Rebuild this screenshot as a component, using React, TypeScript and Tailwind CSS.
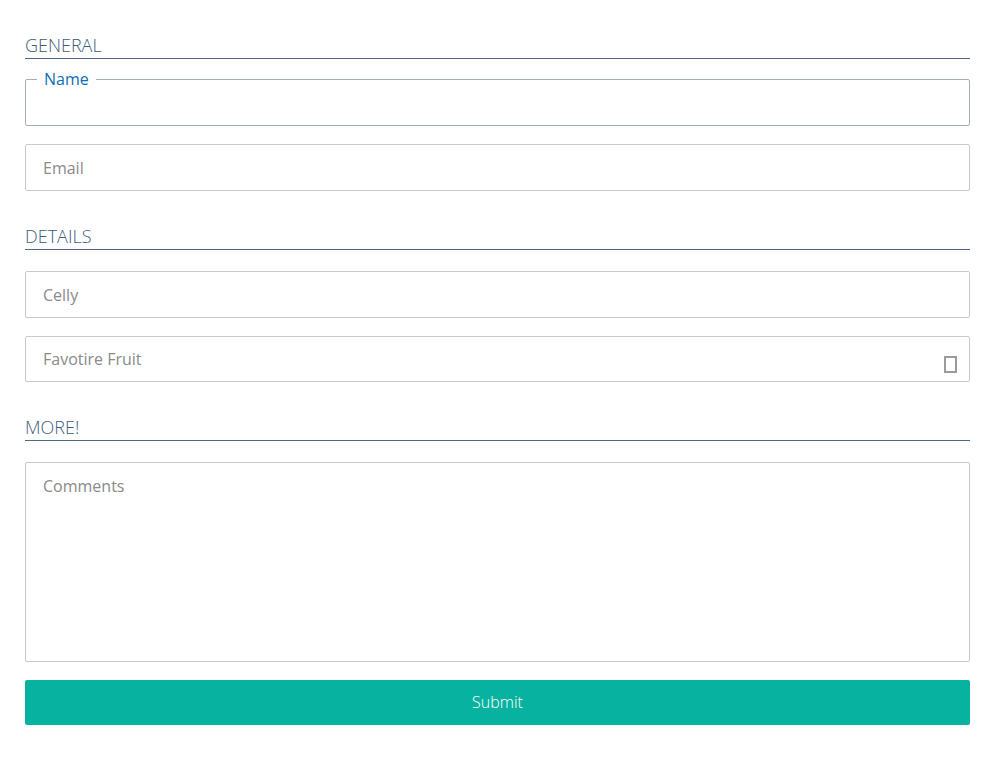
import React from "react";

const font = { fontFamily: '"Open Sans", "Noto Sans", sans-serif' };

function SectionHeading({ children, className = "" }: { children: React.ReactNode; className?: string }) {
  return (
    <div
      className={`h-[33px] flex items-end border-b border-[#4a6785] pb-[1px] text-[18px] font-light leading-[24px] text-[#3d5c7c] ${className}`}
    >
      {children}
    </div>
  );
}

function TextField({ placeholder, className = "", children }: { placeholder: string; className?: string; children?: React.ReactNode }) {
  return (
    <div
      className={`relative flex items-center border border-[#c9c9c9] rounded-[2px] pl-[17px] pr-[12px] text-[16px] text-[#8a8a8a] ${className}`}
    >
      <span className="flex-1">{placeholder}</span>
      {children}
    </div>
  );
}

export default function App() {
  return (
    <div className="min-h-[763px] bg-white pl-[25px] pr-[24px] pt-[26px] pb-[38px]" style={font}>
      <form className="flex flex-col" onSubmit={(e) => e.preventDefault()}>
        <SectionHeading>GENERAL</SectionHeading>

        <div className="relative mt-[20px] h-[47px] border border-[#a4aeb9] rounded-[2px]">
          <span className="absolute left-[11px] top-[-12px] bg-white px-[7px] text-[16px] leading-[22px] text-[#0b6db3]">
            Name
          </span>
        </div>

        <TextField placeholder="Email" className="mt-[18px] h-[47px]" />

        <SectionHeading className="mt-[26px]">DETAILS</SectionHeading>

        <TextField placeholder="Celly" className="mt-[21px] h-[47px]" />

        <TextField placeholder="Favotire Fruit" className="mt-[18px] h-[46px] items-start pt-[10px]">
          <span className="absolute right-[12px] top-[19px] h-[17px] w-[13px] border-2 border-[#9b9b9b]" />
        </TextField>

        <SectionHeading className="mt-[26px]">MORE!</SectionHeading>

        <div className="mt-[21px] h-[200px] border border-[#c9c9c9] rounded-[2px] pl-[17px] pt-[11px] text-[16px] text-[#8a8a8a]">
          Comments
        </div>

        <button
          type="submit"
          className="mt-[18px] h-[45px] rounded-[2px] bg-[#07b3a0] pb-[2px] text-[16px] font-light text-white"
        >
          Submit
        </button>
      </form>
    </div>
  );
}
